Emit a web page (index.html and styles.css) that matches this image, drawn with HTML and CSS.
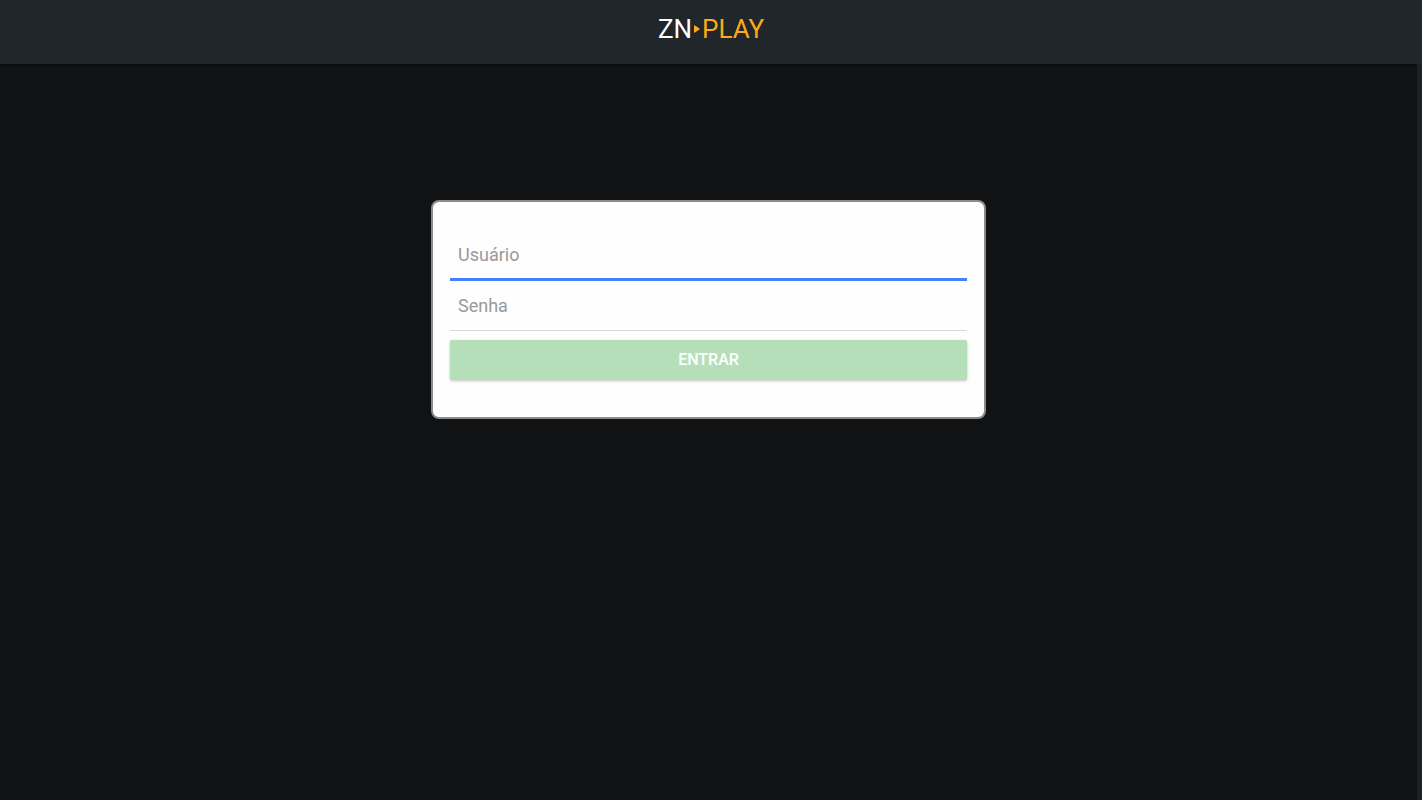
FILE: index.html
```
<!DOCTYPE html>
<html lang="pt-BR">
<head>
    <meta charset="UTF-8">
    <meta name="viewport" content="width=device-width, initial-scale=1.0">
    <title>ZN Play</title>
    <link rel="stylesheet" href="styles.css">
</head>
<body>
    <header class="header">
        <div class="logo">
            <span>ZN</span>
            <svg class="logo-arrow" viewBox="0 0 6 8" aria-hidden="true">
                <path d="M0 1 Q0 0 1 .4 L5.4 3.4 Q6 4 5.4 4.6 L1 7.6 Q0 8 0 7 Z"/>
            </svg>
            <span class="logo-play">PLAY</span>
        </div>
    </header>
    <main class="content">
        <form class="login">
            <input class="field active" type="text" name="usuario" placeholder="Usuário" aria-label="Usuário">
            <input class="field" type="password" name="senha" placeholder="Senha" aria-label="Senha">
            <button class="btn" type="submit" disabled>Entrar</button>
        </form>
    </main>
</body>
</html>
```
FILE: styles.css
```
* {
    box-sizing: border-box;
}

body {
    font-family: Roboto, sans-serif;
    background-color: #111214;
    display: flex;
    flex-direction: column;
    min-height: 100vh;
    margin: 0;
}

.header {
    background-color: #20262a;
    height: 64px;
    padding-bottom: 6px;
    display: flex;
    justify-content: center;
    align-items: center;
    box-shadow: 0 1px 2px rgba(0, 0, 0, 0.5);
}

.logo {
    display: flex;
    align-items: center;
    gap: 2px;
    color: #fff;
    font-size: 26px;
    line-height: 32px;
}

.logo-arrow {
    width: 6px;
    height: 8px;
    fill: #fcaa17;
}

.logo-play {
    color: #fcaa17;
}

.content {
    flex: 1;
    padding: 136px 16px 0;
    border-right: 5px solid #1d2124;
}

.login {
    max-width: 555px;
    margin: 0 auto;
    padding: 28px 17px 37px;
    background-color: #fefefe;
    border: 2px solid #8b8b8b;
    border-radius: 8px;
}

.field {
    display: block;
    width: 100%;
    height: 50px;
    padding: 0 8px;
    border: none;
    border-bottom: 1px solid #d8d8d8;
    border-radius: 0;
    outline: none;
    background: transparent;
    color: #222;
    font-family: inherit;
    font-size: 18px;
}

.field::placeholder {
    color: #999;
}

.field.active,
.field:focus {
    height: 51px;
    border-bottom: 3px solid #4580fb;
}

.btn {
    display: block;
    width: 100%;
    height: 40px;
    margin-top: 9px;
    padding: 0 0 2px;
    border: none;
    border-radius: 2px;
    background-color: #b5dfb9;
    box-shadow: 0 1px 3px rgba(0, 0, 0, 0.24);
    color: #fff;
    font-family: inherit;
    font-size: 16px;
    font-weight: 500;
    text-transform: uppercase;
}
```
